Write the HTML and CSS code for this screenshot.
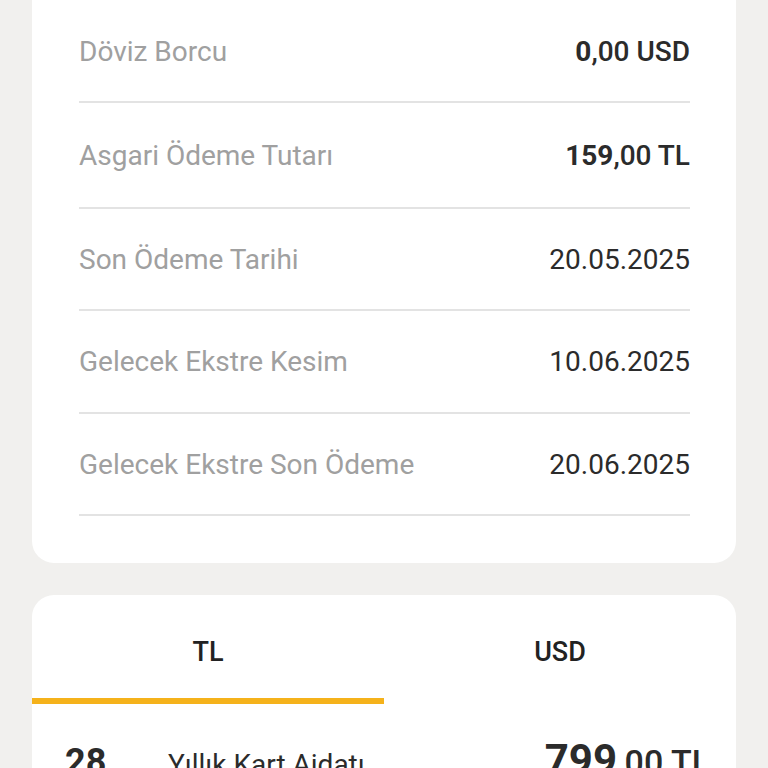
FILE: index.html
```html
<!DOCTYPE html>
<html lang="tr">
<head>
<meta charset="utf-8">
<link rel="stylesheet" href="styles.css">
</head>
<body>
<div class="page">
  <section class="card summary">
    <div class="row">
      <span class="label">Döviz Borcu</span>
      <span class="value"><b>0</b>,00 USD</span>
    </div>
    <div class="row">
      <span class="label">Asgari Ödeme Tutarı</span>
      <span class="value"><b>159</b>,00 TL</span>
    </div>
    <div class="row">
      <span class="label">Son Ödeme Tarihi</span>
      <span class="date">20.05.2025</span>
    </div>
    <div class="row">
      <span class="label">Gelecek Ekstre Kesim</span>
      <span class="date">10.06.2025</span>
    </div>
    <div class="row">
      <span class="label">Gelecek Ekstre Son Ödeme</span>
      <span class="date">20.06.2025</span>
    </div>
  </section>

  <section class="card details">
    <div class="tabs">
      <div class="tab active">TL</div>
      <div class="tab">USD</div>
    </div>
    <div class="item">
      <span class="day">28</span>
      <span class="desc">Yıllık Kart Aidatı</span>
      <span class="amount"><b>799</b>,00 TL</span>
    </div>
  </section>
</div>
</body>
</html>
```

FILE: styles.css
```css
html, body {
  margin: 0;
  padding: 0;
  background: #f1f0ee;
  font-family: Roboto, "Noto Sans", sans-serif;
  color: #2b2b2b;
}
.page {
  height: 768px;
  overflow: hidden;
  padding: 0 32px;
  display: flex;
  flex-direction: column;
  gap: 32px;
}
.card {
  background: #fff;
  border-radius: 22px;
}
.summary {
  margin-top: -40px;
  padding: 41px 46px 47px 47px;
}
.row {
  display: flex;
  justify-content: space-between;
  align-items: center;
  height: 100px;
  border-bottom: 2px solid #e3e3e3;
}
.row:nth-child(2) { height: 104px; }
.row:nth-child(4) { height: 101px; }
.label {
  font-size: 28px;
  color: #a0a0a0;
}
.value {
  font-size: 28px;
  font-weight: 500;
  color: #2b2b2b;
}
.value b { font-weight: 700; }
.date {
  font-size: 28px;
  color: #2b2b2b;
}
.details {
  flex: 1;
  border-radius: 22px 22px 0 0;
}
.tabs {
  display: flex;
}
.tab {
  flex: 1;
  height: 109px;
  padding-top: 10px;
  box-sizing: border-box;
  display: flex;
  align-items: center;
  justify-content: center;
  font-size: 27px;
  font-weight: 500;
  color: #222;
  border-bottom: 6px solid transparent;
}
.tab.active {
  border-bottom-color: #f5b21b;
}
.item {
  display: flex;
  align-items: baseline;
  padding: 31px 26px 0 33px;
}
.day {
  font-size: 36px;
  font-weight: 700;
  width: 103px;
}
.desc {
  font-size: 28px;
  flex: 1;
}
.amount {
  font-size: 34px;
  font-weight: 500;
}
.amount b {
  font-size: 42px;
  font-weight: 700;
}
```
